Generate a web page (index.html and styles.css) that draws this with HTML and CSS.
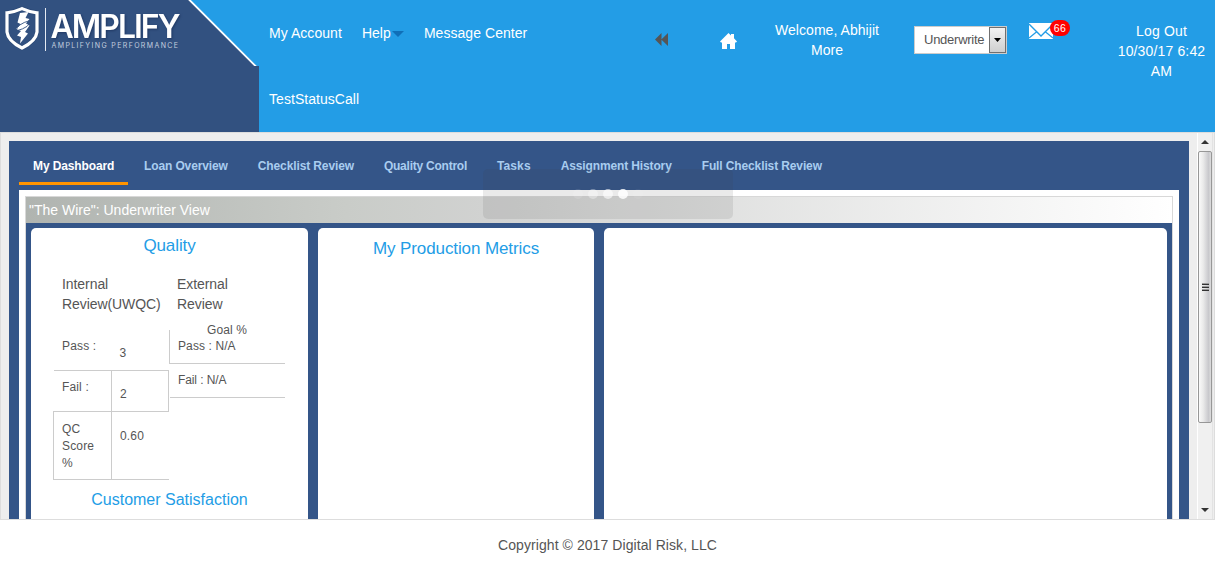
FILE: index.html
```html
<!DOCTYPE html>
<html lang="en">
<head>
<meta charset="utf-8">
<title>Amplify</title>
<link rel="stylesheet" href="styles.css">
</head>
<body>
<header class="header">
  <div class="brand">
    <svg class="brand-art" width="259" height="66" viewBox="0 0 259 66">
      <path d="M189 0H259V66H256.500Z" fill="#239de6"/>
      <path d="M188 -1.500L257 67.500" stroke="#fff" stroke-width="1.900"/>
      <path d="M22 8.600Q29.500 12 37 12.800V32Q36 41 22 48Q8 41 7 32V12.800Q14.500 12 22 8.600Z" fill="none" stroke="#213c66" stroke-width="4.500" opacity=".35"/>
      <path d="M22 8.600Q29.500 12 37 12.800V32Q36 41 22 48Q8 41 7 32V12.800Q14.500 12 22 8.600Z" fill="none" stroke="#fff" stroke-width="3.200"/>
      <path d="M20 13L28.500 12L25.500 18L29.500 19L26 23.500L29.500 25.500L25 32L28 33.500L20 43.500L21 37L17 35.500L21 31L16 29L20.500 24L17.500 22.500Z" fill="#fff"/>
      <path d="M16 31Q17 24 30 20.500Q31 27 16 31Z" fill="none" stroke="#325180" stroke-width=".9"/>
      <path d="M45.500 8V51" stroke="#e5eaf2"/>
      <text class="logo-name" x="50.500" y="38" textLength="128" lengthAdjust="spacingAndGlyphs">AMPLIFY</text>
      <text class="logo-tag" x="51.500" y="47.700" textLength="126.500">AMPLIFYING PERFORMANCE</text>
    </svg>
  </div>
  <nav class="menu">
    <a>My Account</a>
    <a class="help">Help<svg width="12" height="6" viewBox="0 0 12 6"><path d="M0 0H12L6 6Z" fill="#0f6fb8"/></svg></a>
    <a>Message Center</a>
    <a>TestStatusCall</a>
  </nav>
  <svg class="rewind" width="13" height="13" viewBox="0 0 13 13"><path d="M0 6.500L6.500 0V13ZM6.300 6.500L13 0V13Z" fill="#555"/></svg>
  <svg class="home" width="17" height="16" viewBox="0 0 17 16"><path d="M8.500 0L11 2.500V1H14V5.300L17 8.500L16 9.500H15V16H10V11H7V16H2V9.500H1L0 8.500Z" fill="#fff"/></svg>
  <div class="welcome">Welcome, Abhijit<br>More</div>
  <div class="select"><span>Underwrite</span><i><svg width="7" height="4" viewBox="0 0 7 4"><path d="M0 0H7L3.500 4Z"/></svg></i></div>
  <div class="mail">
    <svg width="24" height="16" viewBox="0 0 24 16"><path d="M0 0H24V16H0Z" fill="#fff"/><path d="M0 1L12 13L24 1M0 15L8 8.500M24 15L16 8.500" fill="none" stroke="#239de6" stroke-width="1.300"/></svg>
    <b>66</b>
  </div>
  <div class="logout">Log Out<br>10/30/17 6:42<br>AM</div>
</header>

<main class="frame">
  <div class="panel">
    <nav class="tabs">
      <a class="active">My Dashboard</a><a>Loan Overview</a><a>Checklist Review</a><a>Quality Control</a><a>Tasks</a><a>Assignment History</a><a>Full Checklist Review</a>
    </nav>
    <div class="content">
      <section class="view">
        <h1>"The Wire": Underwriter View</h1>
        <div class="cards">
          <article class="card quality">
            <h2>Quality</h2>
            <div class="reviews">
              <div class="internal">
                <h3>Internal<br>Review(UWQC)</h3>
                <div class="row pass"><span>Pass :</span><span class="num">3</span></div>
                <div class="row fail"><span>Fail :</span><span class="num">2</span></div>
                <div class="row score"><span>QC Score %</span><span class="num">0.60</span></div>
              </div>
              <div class="external">
                <h3>External<br>Review</h3>
                <div class="ext-pass"><p class="goal">Goal %</p><p>Pass : N/A</p></div>
                <div class="ext-fail"><p>Fail : N/A</p></div>
              </div>
            </div>
            <h2 class="satisfaction">Customer Satisfaction</h2>
          </article>
          <article class="card metrics"><h2>My Production Metrics</h2></article>
          <article class="card wide"></article>
        </div>
      </section>
    </div>
  </div>
  <div class="scrollbar">
    <div class="arrow"><svg width="8" height="4" viewBox="0 0 8 4"><path d="M0 4L4 0L8 4Z" fill="#333"/></svg></div>
    <div class="thumb"><i></i><i></i><i></i></div>
    <div class="arrow down"><svg width="8" height="4" viewBox="0 0 8 4"><path d="M0 0H8L4 4Z" fill="#333"/></svg></div>
  </div>
</main>
<div class="loader"><i></i><i></i><i></i><i></i><i></i></div>
<footer class="footer">Copyright © 2017 Digital Risk, LLC</footer>
</body>
</html>
```
FILE: styles.css
```css
* { box-sizing: border-box; }
body {
  margin: 0;
  height: 563px;
  overflow: hidden;
  background: #fff;
  color: #555;
  font: 14px/20px "Liberation Sans", Arial, sans-serif;
}
svg { display: block; flex: none; }
h1, h2, h3, p { margin: 0; font-weight: normal; }

.header { display: flex; height: 132px; background: #239de6; color: #fff; }
.brand { width: 259px; flex: none; background: #325180; }
.logo-name {
  font: 600 32.5px Inter, sans-serif;
  letter-spacing: -2px;
  fill: #fff;
  filter: drop-shadow(1px 1px 1px rgba(20, 40, 80, .6));
}
.logo-tag { font: 7px Inter, sans-serif; fill: #c3cedf; }

.menu {
  display: flex;
  flex-wrap: wrap;
  align-content: flex-start;
  width: 396px;
  flex: none;
}
.menu a { display: flex; align-items: center; height: 66px; padding: 0 10px; letter-spacing: .05px; }
.help svg { margin: 2px -2px 0 1px; }
.menu a:nth-child(3) { padding-left: 12px; }
.menu a:last-child { margin-right: 100px; }
.rewind { margin-top: 33px; }
.home { margin: 33px 0 0 52px; }
.welcome { width: 120px; flex: none; margin: 20px 0 0 30px; text-align: center; letter-spacing: .05px; }
.select {
  display: flex;
  width: 93px;
  height: 28px;
  flex: none;
  margin: 26px 0 0 27px;
  padding-left: 9px;
  border: 1px solid #ccc;
  background: #fff;
  color: #555;
  font-size: 13px;
  line-height: 26px;
}
.select span { width: 65px; letter-spacing: -.25px; }
.select i {
  display: flex;
  align-items: center;
  justify-content: center;
  width: 17px;
  border: 1px solid #707070;
  background: linear-gradient(#f2f2f2, #cfcfcf);
}
.mail { display: flex; width: 41px; flex: none; margin: 20px 0 0 22px; }
.mail svg { margin-top: 3px; }
.mail b {
  width: 20px;
  height: 16px;
  flex: none;
  margin-left: -3px;
  border-radius: 8px;
  background: red;
  font: 10.5px/17px "Liberation Sans", sans-serif;
  letter-spacing: .3px;
  text-align: center;
}
.logout { width: 107px; flex: none; margin: 21px 0 0 38px; text-align: center; letter-spacing: .15px; }

.frame {
  display: flex;
  height: 388px;
  border: 1px solid #ddd;
  background: #eee;
  overflow: hidden;
}
.panel { width: 1180px; flex: none; margin: 8px 0 0 8px; padding: 0 10px; background: #345588; }
.tabs { display: flex; gap: 2px; height: 49px; }
.tabs a {
  height: 44px;
  padding: 16px 14px 0;
  color: #a9cdf0;
  font-size: 12px;
  font-weight: bold;
  line-height: 18px;
  letter-spacing: -.12px;
  white-space: nowrap;
}
.tabs a:nth-child(4) { letter-spacing: -.24px; }
.tabs a:nth-child(5) { letter-spacing: .1px; }
.tabs a:nth-child(6) { letter-spacing: -.13px; }
.tabs .active { width: 109px; border-bottom: 3px solid #ff9400; color: #fff; }
.content { height: 400px; padding: 6px 6px 0; background: #fff; }
.view { height: 400px; border: 1px solid #d8d8d8; background: #345588; }
.view h1 {
  height: 26px;
  padding-left: 3px;
  background: linear-gradient(90deg, #b0b4b0, #c9ccc8 28%, #d1d2d1 40%, #fff);
  color: #fff;
  font-size: 14px;
  line-height: 26px;
}
.cards { display: flex; gap: 10px; padding: 5px; }
.card { height: 380px; border-radius: 5px 5px 0 0; background: #fff; }
.quality { width: 277px; }
.metrics { width: 276px; padding-top: 3px; }
.wide { width: 563px; }
.card h2 { height: 35px; color: #239de6; font-size: 17px; line-height: 35px; text-align: center; letter-spacing: -.1px; }

.reviews { display: flex; margin: 11px 0 0 22px; font-size: 12px; line-height: 17px; }
.internal { width: 116px; }
.external { width: 116px; }
.reviews h3 { height: 56px; padding-left: 9px; font-size: 14px; line-height: 20px; letter-spacing: -.07px; }
.external h3 { padding-left: 8px; }
.row { display: flex; }
.row span { width: 58px; padding-left: 8px; letter-spacing: .15px; }
.pass { height: 41px; margin-left: 1px; border-bottom: 1px solid #ccc; }
.pass span { padding-top: 8px; }
.row .num { padding-top: 15px; }
.fail { height: 41px; border-bottom: 1px solid #ccc; border-right: 1px solid #ccc; }
.fail span, .score span { padding-top: 8px; padding-left: 9px; border-right: 1px solid #ccc; width: 59px; }
.row.fail .num, .row.score .num { padding-left: 8px; border-right: 0; width: 56px; }
.score { height: 68px; border-bottom: 1px solid #ccc; border-left: 1px solid #ccc; }
.score span { padding: 9px 12px 0 8px; width: 58px; }
.row.score .num { padding-top: 16px; }
.row.pass .num { padding-left: 8px; }
.ext-pass { display: flow-root; height: 34px; border-left: 1px solid #ccc; border-bottom: 1px solid #ccc; padding-left: 8px; }
.ext-pass p { line-height: 16px; letter-spacing: .1px; }
.ext-pass .goal { margin-top: -8px; padding-left: 29px; }
.ext-fail { height: 34px; margin-left: 1px; padding: 8px 0 0 8px; border-bottom: 1px solid #ccc; letter-spacing: -.1px; }
.card .satisfaction { margin-top: 2px; font-size: 16px; letter-spacing: 0; }

.scrollbar {
  display: flex;
  flex-direction: column;
  width: 16px;
  margin-left: 8px;
  flex: none;
  border-left: 1px solid #fff;
  border-right: 1px solid #e3e3e3;
  background: #f0f0f0;
}
.arrow { display: flex; justify-content: center; height: 18px; padding-top: 7px; flex: none; }
.down { margin-top: auto; }
.thumb {
  display: flex;
  flex-direction: column;
  align-items: center;
  justify-content: center;
  gap: 1px;
  height: 272px;
  flex: none;
  border: 1px solid #979797;
  border-radius: 2px;
  background: linear-gradient(90deg, #fafafa, #eaeaea 35%, #c8c8cc 80%, #ddd);
}
.thumb i { width: 7px; height: 2px; border-bottom: 1px solid #333; background: #999; }

/* Busy indicator floating over the dashboard */
.loader {
  position: absolute;
  left: 483px;
  top: 169px;
  display: flex;
  gap: 5px;
  width: 250px;
  height: 50px;
  padding: 20px 0 0 90px;
  border-radius: 5px;
  background: rgba(60, 60, 60, .11);
}
.loader i { width: 10px; height: 10px; border-radius: 50%; background: #fff; opacity: .85; }
.loader i:nth-child(1) { opacity: .12; }
.loader i:nth-child(2) { opacity: .35; }
.loader i:nth-child(3) { opacity: .6; }
.loader i:nth-child(5) { opacity: .07; }
.footer { padding-top: 15px; text-align: center; letter-spacing: .07px; }
```
